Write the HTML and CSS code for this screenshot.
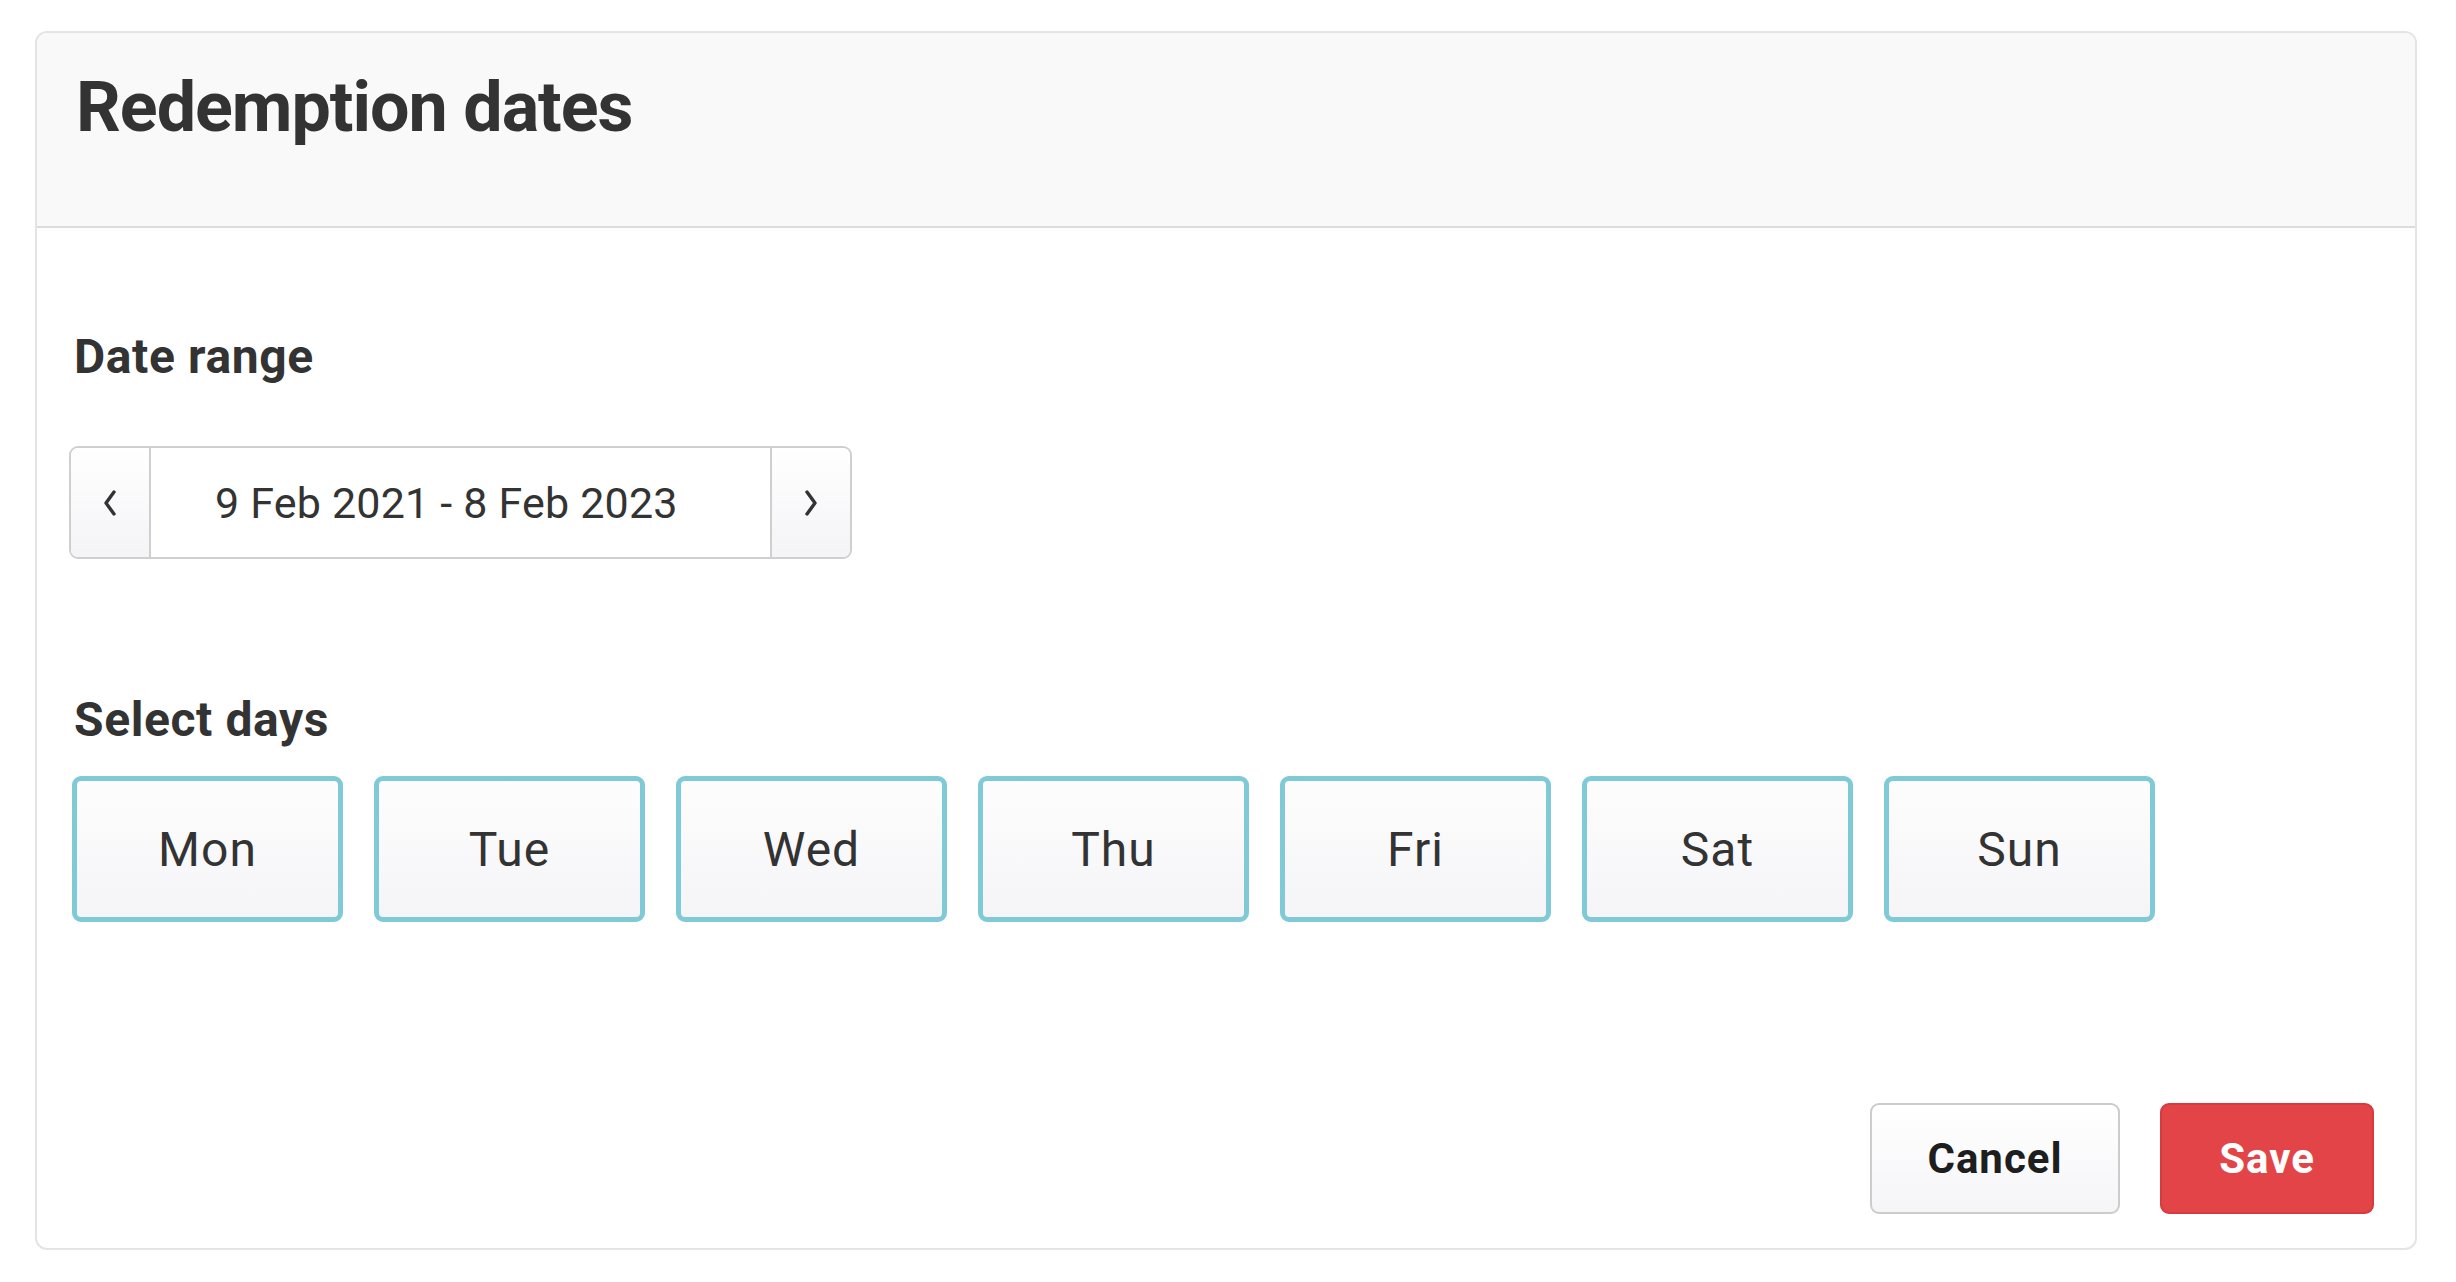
FILE: index.html
```html
<!DOCTYPE html>
<html lang="en">
<head>
<meta charset="utf-8">
<title>Redemption dates</title>
<link rel="stylesheet" href="styles.css">
</head>
<body>
<div class="card">
  <div class="card-header">
    <h1 class="title">Redemption dates</h1>
  </div>
  <div class="card-body">
    <h2 class="label">Date range</h2>
    <div class="range">
      <button class="range-btn" aria-label="Previous">
        <svg width="18" height="28" viewBox="0 0 18 28"><path d="M13 3 L5 14 L13 25" fill="none" stroke="#333" stroke-width="3.4" stroke-linecap="round" stroke-linejoin="round"/></svg>
      </button>
      <div class="range-value">9 Feb 2021 - 8 Feb 2023</div>
      <button class="range-btn" aria-label="Next">
        <svg width="18" height="28" viewBox="0 0 18 28"><path d="M5 3 L13 14 L5 25" fill="none" stroke="#333" stroke-width="3.4" stroke-linecap="round" stroke-linejoin="round"/></svg>
      </button>
    </div>
    <h2 class="label label-days">Select days</h2>
    <div class="days">
      <button class="day">Mon</button>
      <button class="day">Tue</button>
      <button class="day">Wed</button>
      <button class="day">Thu</button>
      <button class="day">Fri</button>
      <button class="day">Sat</button>
      <button class="day">Sun</button>
    </div>
    <div class="footer">
      <button class="btn btn-cancel">Cancel</button>
      <button class="btn btn-save">Save</button>
    </div>
  </div>
</div>
</body>
</html>
```
FILE: styles.css
```css
* { box-sizing: border-box; }
html, body {
  margin: 0;
  padding: 0;
  background: #ffffff;
  font-family: Roboto, "Liberation Sans", Arial, sans-serif;
  color: #333333;
}
.card {
  margin: 31px 0 0 35px;
  width: 2382px;
  height: 1219px;
  border: 2px solid #e4e4e4;
  border-radius: 12px;
  overflow: hidden;
  display: flex;
  flex-direction: column;
  background: #ffffff;
}
.card-header {
  background: #f9f9f9;
  height: 195px;
  border-bottom: 2px solid #dcdcdc;
  padding: 31px 0 0 39px;
  flex: none;
}
.title {
  margin: 0;
  font-size: 70px;
  line-height: 86px;
  font-weight: 700;
  letter-spacing: -1px;
  color: #333333;
}
.card-body {
  flex: 1;
  display: flex;
  flex-direction: column;
  padding: 100px 41px 34px 37px;
}
.label {
  margin: 0;
  font-size: 48px;
  line-height: 58px;
  font-weight: 700;
  letter-spacing: 0.6px;
  color: #333333;
}
.range {
  margin: 60px 0 0 -5px;
  width: 783px;
  height: 113px;
  border: 2px solid #cfcfcf;
  border-radius: 9px;
  display: flex;
  overflow: hidden;
}
.range-btn {
  width: 78px;
  flex: none;
  border: 0;
  margin: 0;
  padding: 0;
  background: linear-gradient(#ffffff, #f4f4f7);
  display: flex;
  align-items: center;
  justify-content: center;
  cursor: pointer;
}
.range-value {
  flex: 1;
  border-left: 2px solid #cfcfcf;
  border-right: 2px solid #cfcfcf;
  background: #ffffff;
  display: flex;
  align-items: center;
  padding-left: 64px;
  font-size: 43px;
  letter-spacing: 0.2px;
  color: #333333;
}
.label-days {
  margin-top: 132px;
}
.days {
  margin: 27px 0 0 -2px;
  display: flex;
  gap: 31px;
}
.day {
  width: 271px;
  height: 146px;
  border: 5px solid #80cad8;
  border-radius: 9px;
  background: linear-gradient(#fdfdfd, #f5f5f8);
  font-family: Roboto, "Liberation Sans", Arial, sans-serif;
  font-size: 48px;
  letter-spacing: 1px;
  color: #333333;
  padding: 0;
  cursor: pointer;
}
.footer {
  margin-top: auto;
  display: flex;
  justify-content: flex-end;
  gap: 40px;
}
.btn {
  height: 111px;
  border-radius: 9px;
  font-family: Roboto, "Liberation Sans", Arial, sans-serif;
  font-size: 42px;
  font-weight: 700;
  letter-spacing: 1px;
  padding: 0;
  cursor: pointer;
}
.btn-cancel {
  width: 250px;
  border: 2px solid #cccccc;
  background: linear-gradient(#ffffff, #f5f5f8);
  color: #1e1e1e;
}
.btn-save {
  width: 214px;
  border: 2px solid #d63b40;
  background: #e24447;
  color: #ffffff;
}
```
